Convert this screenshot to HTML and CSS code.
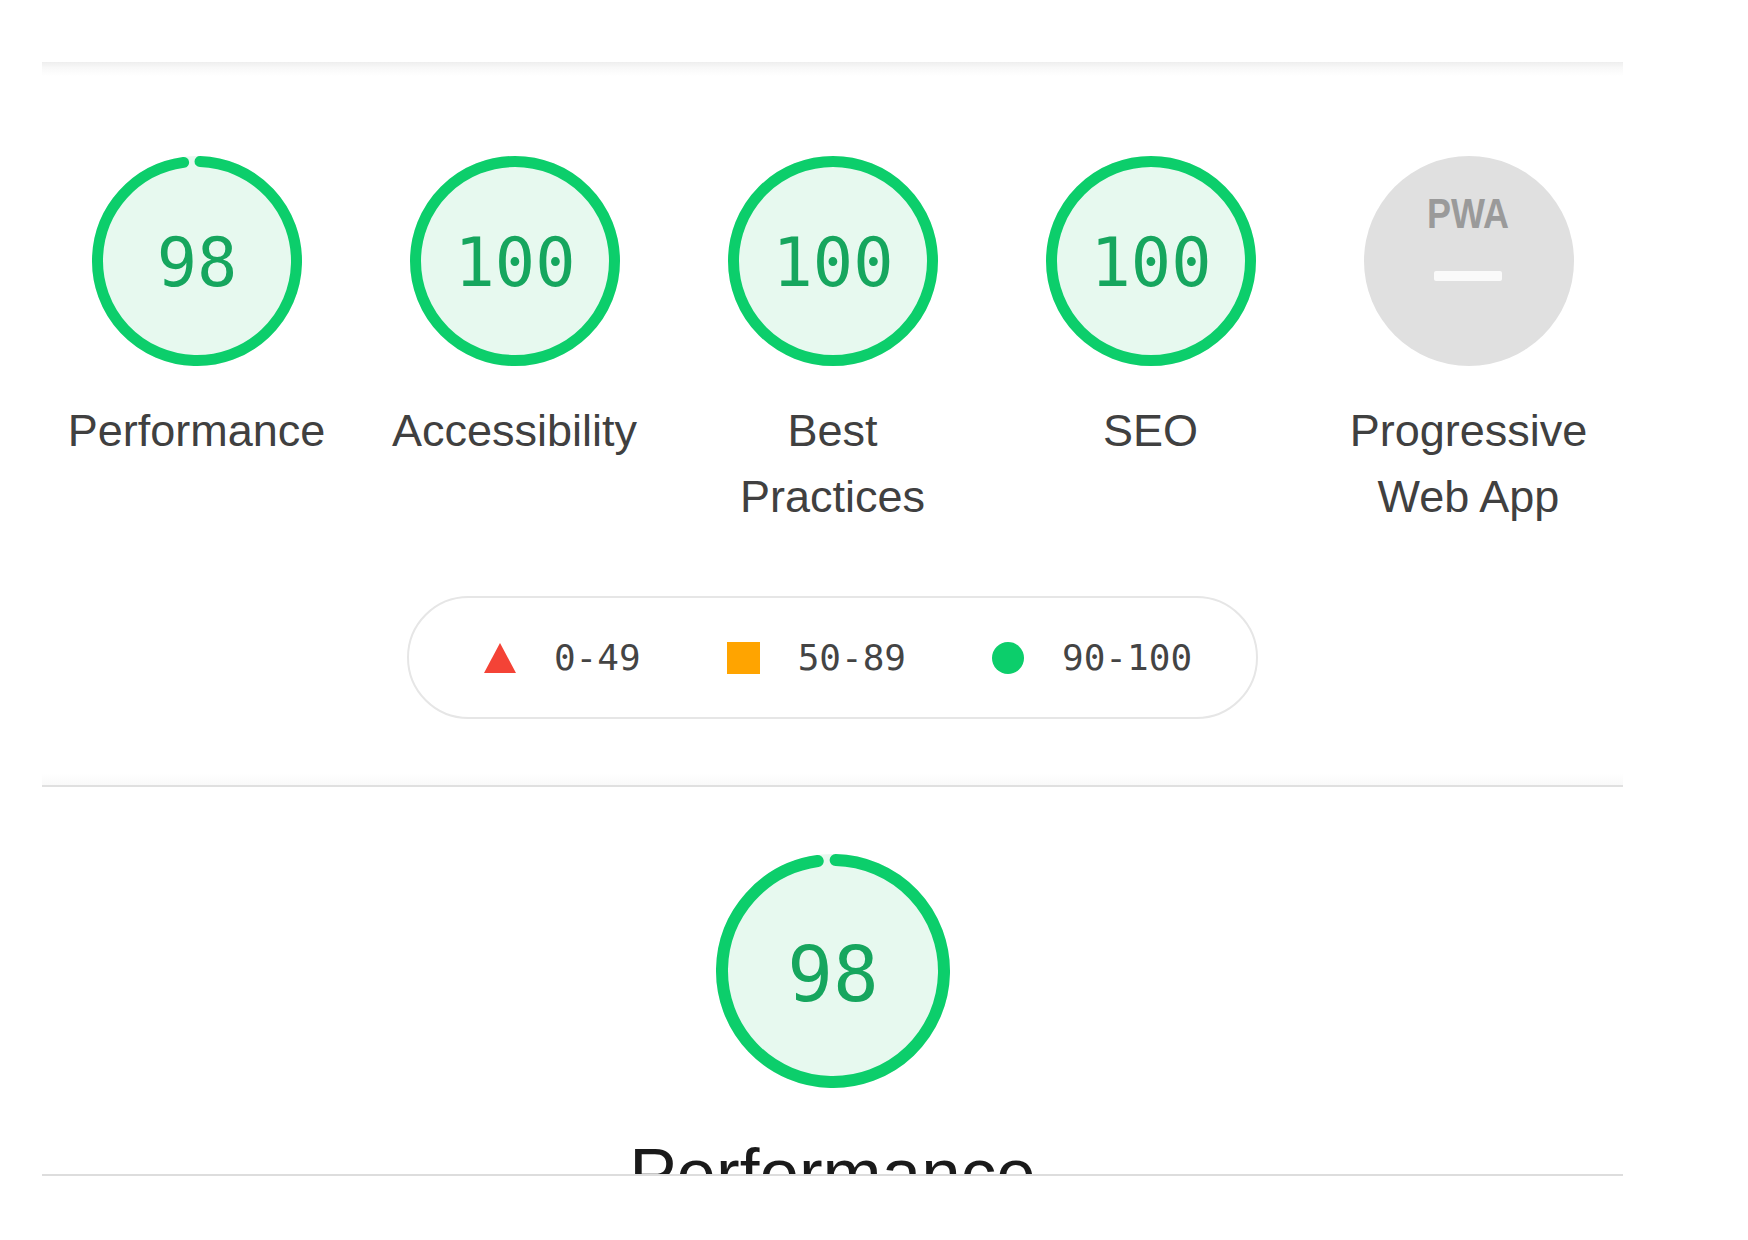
FILE: index.html
```html
<!DOCTYPE html>
<html lang="en">
<head>
<meta charset="utf-8">
<title>Lighthouse scores</title>
<link rel="stylesheet" href="styles.css">
</head>
<body>
<div class="page">
  <div class="shade"></div>

  <div class="gauges">
    <div class="gauge">
      <svg class="gauge-svg" viewBox="0 0 210 210" width="210" height="210">
        <circle class="g-base" cx="105" cy="105" r="99.5"/>
        <circle class="g-arc" cx="105" cy="105" r="99.5" stroke-dasharray="607.7 1000" transform="rotate(-88.27 105 105)"/>
        <text class="g-num" x="105" y="130">98</text>
      </svg>
      <div class="g-label">Performance</div>
    </div>
    <div class="gauge">
      <svg class="gauge-svg" viewBox="0 0 210 210" width="210" height="210">
        <circle class="g-base" cx="105" cy="105" r="99.5"/>
        <circle class="g-arc g-full" cx="105" cy="105" r="99.5"/>
        <text class="g-num" x="105" y="130">100</text>
      </svg>
      <div class="g-label">Accessibility</div>
    </div>
    <div class="gauge">
      <svg class="gauge-svg" viewBox="0 0 210 210" width="210" height="210">
        <circle class="g-base" cx="105" cy="105" r="99.5"/>
        <circle class="g-arc g-full" cx="105" cy="105" r="99.5"/>
        <text class="g-num" x="105" y="130">100</text>
      </svg>
      <div class="g-label">Best Practices</div>
    </div>
    <div class="gauge">
      <svg class="gauge-svg" viewBox="0 0 210 210" width="210" height="210">
        <circle class="g-base" cx="105" cy="105" r="99.5"/>
        <circle class="g-arc g-full" cx="105" cy="105" r="99.5"/>
        <text class="g-num" x="105" y="130">100</text>
      </svg>
      <div class="g-label">SEO</div>
    </div>
    <div class="gauge">
      <svg class="gauge-svg" viewBox="0 0 210 210" width="210" height="210">
        <circle class="pwa-base" cx="105" cy="105" r="105"/>
        <text class="pwa-text" x="104" y="72" textLength="82" lengthAdjust="spacingAndGlyphs">PWA</text>
        <rect class="pwa-dash" x="70" y="115" width="68" height="10" rx="2"/>
      </svg>
      <div class="g-label">Progressive Web App</div>
    </div>
  </div>

  <div class="legend">
    <div class="leg-item">
      <svg class="leg-shape" viewBox="0 0 32 30" width="32" height="30"><polygon points="16,0 32,30 0,30" fill="#f44336"/></svg>
      <span class="leg-text">0-49</span>
    </div>
    <div class="leg-item">
      <span class="leg-square"></span>
      <span class="leg-text">50-89</span>
    </div>
    <div class="leg-item">
      <span class="leg-circle"></span>
      <span class="leg-text">90-100</span>
    </div>
  </div>

  <div class="divider"></div>

  <div class="category">
    <svg class="big-gauge" viewBox="0 0 234 234" width="234" height="234">
      <circle class="g-base big" cx="117" cy="117" r="111"/>
      <circle class="g-arc big" cx="117" cy="117" r="111" stroke-dasharray="678.8 1000" transform="rotate(-88.66 117 117)"/>
      <text class="g-num big-num" x="117" y="147">98</text>
    </svg>
    <div class="title-clip">
      <div class="cat-title">Performance</div>
    </div>
  </div>
</div>
</body>
</html>
```

FILE: styles.css
```css
html, body {
  margin: 0;
  padding: 0;
  background: #ffffff;
}

body {
  font-family: "Liberation Sans", Arial, sans-serif;
}

.page {
  margin-left: 42px;
  width: 1581px;
  padding-top: 62px;
}

.shade {
  height: 14px;
  background: linear-gradient(to bottom, #eeeeee 0%, #f8f8f8 40%, #ffffff 100%);
}

.gauges {
  display: flex;
  justify-content: center;
  padding-top: 80px;
}

.gauge {
  flex: 0 0 318px;
  width: 318px;
  display: flex;
  flex-direction: column;
  align-items: center;
}

.gauge-svg {
  display: block;
}

.g-base {
  fill: #e7f9ef;
  stroke: #e7f9ef;
  stroke-width: 11;
}

.g-arc {
  fill: none;
  stroke: #0cce6b;
  stroke-width: 11;
  stroke-linecap: round;
}

.g-full {
  stroke-linecap: butt;
}

.g-base.big,
.g-arc.big {
  stroke-width: 12;
}

.g-num {
  font-family: "DejaVu Sans Mono", "Liberation Mono", monospace;
  font-size: 67px;
  fill: #16a65e;
  text-anchor: middle;
}

.big-num {
  font-size: 76px;
}

.pwa-base {
  fill: #e0e0e0;
}

.pwa-text {
  font-family: "Liberation Sans", Arial, sans-serif;
  font-weight: bold;
  font-size: 42px;
  fill: #9a9a9a;
  text-anchor: middle;
}

.pwa-dash {
  fill: #fafafa;
}

.g-label {
  margin-top: 32px;
  width: 272px;
  text-align: center;
  font-size: 45px;
  line-height: 66px;
  color: #404040;
}

.legend {
  display: flex;
  align-items: center;
  gap: 86px;
  width: max-content;
  height: 123px;
  box-sizing: border-box;
  margin: 66px auto 0;
  padding: 0 64px 0 75px;
  border: 2px solid #e6e6e6;
  border-radius: 62px;
}

.leg-item {
  display: flex;
  align-items: center;
  gap: 38px;
}

.leg-shape {
  display: block;
}

.leg-square {
  display: block;
  width: 33px;
  height: 32px;
  background: #ffa400;
}

.leg-circle {
  display: block;
  width: 32px;
  height: 32px;
  border-radius: 50%;
  background: #0cce6b;
}

.leg-text {
  font-family: "DejaVu Sans Mono", "Liberation Mono", monospace;
  font-size: 36px;
  line-height: 40px;
  color: #444444;
}

.divider {
  margin-top: 55px;
  height: 11px;
  background: linear-gradient(to bottom, #ffffff 0%, #f9f9f9 100%);
  border-bottom: 2px solid #e0e0e0;
}

.category {
  display: flex;
  flex-direction: column;
  align-items: center;
  padding-top: 67px;
  border-bottom: 2px solid #dddddd;
}

.big-gauge {
  display: block;
}

.title-clip {
  margin-top: 43px;
  height: 43px;
  width: 100%;
  overflow: hidden;
}

.cat-title {
  font-size: 71px;
  line-height: 85px;
  text-align: center;
  color: #1a1a1a;
}
```
